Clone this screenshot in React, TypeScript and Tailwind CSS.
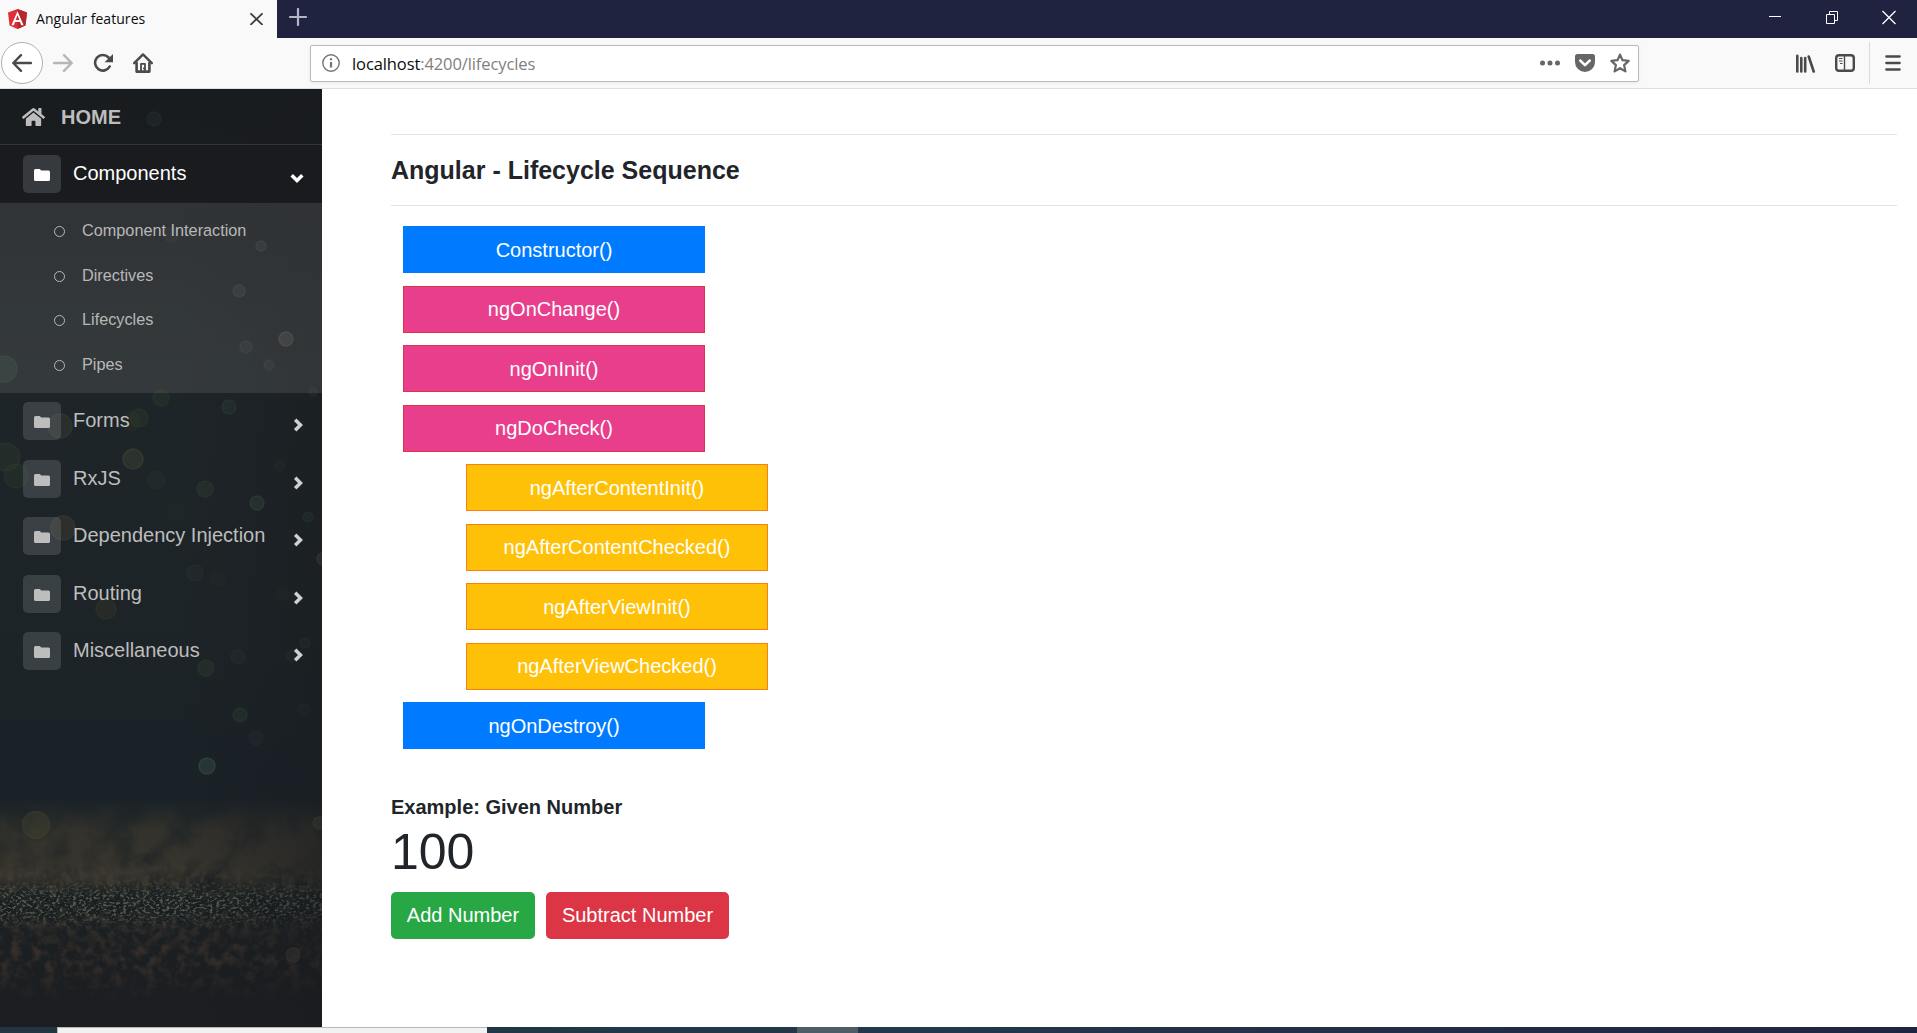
import React from "react";
import { FaHome } from "react-icons/fa";

const BOKEH: [number, number, number, string, number][] = [
  [154, 119, 7, "#2c4a44", 0.45],
  [171, 235, 7, "#4c5654", 0.25],
  [261, 246, 5, "#5a6a66", 0.5],
  [239, 291, 6, "#486055", 0.65],
  [286, 339, 7, "#6f675f", 0.95],
  [246, 347, 6, "#4a5a50", 0.55],
  [269, 365, 5, "#486058", 0.5],
  [4, 369, 13, "#355347", 0.7],
  [161, 398, 8, "#2f4a33", 0.55],
  [229, 407, 7, "#3a5548", 0.6],
  [313, 392, 4, "#3a5545", 0.6],
  [60, 426, 12, "#45483a", 0.7],
  [139, 418, 9, "#33452c", 0.6],
  [131, 421, 9, "#38402d", 0.4],
  [6, 457, 14, "#35402f", 0.7],
  [16, 476, 12, "#354830", 0.5],
  [133, 459, 10, "#4d5338", 0.7],
  [156, 480, 9, "#35453a", 0.35],
  [205, 489, 8, "#40513c", 0.55],
  [257, 503, 7, "#4d6855", 0.65],
  [280, 465, 5, "#41463d", 0.4],
  [308, 517, 5, "#416255", 0.5],
  [63, 528, 12, "#504637", 0.75],
  [176, 512, 9, "#35453a", 0.2],
  [195, 573, 8, "#3c4a48", 0.35],
  [218, 578, 8, "#3c4a48", 0.2],
  [323, 559, 6, "#755c5a", 0.8],
  [106, 609, 10, "#403c2a", 0.7],
  [283, 594, 6, "#3c4a42", 0.3],
  [305, 643, 5, "#35544a", 0.5],
  [238, 657, 7, "#3b4a45", 0.4],
  [206, 668, 8, "#3b5032", 0.6],
  [293, 656, 6, "#38483d", 0.5],
  [240, 715, 7, "#35503d", 0.7],
  [304, 710, 6, "#34453f", 0.45],
  [256, 738, 7, "#304650", 0.4],
  [207, 766, 8, "#42605a", 0.85],
  [36, 825, 13.5, "#46482f", 0.85],
  [319, 823, 6, "#52603f", 0.8],
  [288, 882, 6, "#454835", 0.7],
  [293, 955, 7, "#5c4c44", 0.75],
];

function NightBackdrop() {
  return (
    <svg className="absolute inset-0 h-full w-full" viewBox="0 89 322 938" preserveAspectRatio="none" aria-hidden="true">
      <defs>
        <linearGradient id="sky" x1="0" y1="0" x2="0" y2="1">
          <stop offset="0" stopColor="#191c1f" />
          <stop offset="0.1" stopColor="#1a1d20" />
          <stop offset="0.3" stopColor="#1e2528" />
          <stop offset="0.6" stopColor="#1d2427" />
          <stop offset="0.74" stopColor="#1a2228" />
          <stop offset="0.79" stopColor="#1d2426" />
          <stop offset="0.86" stopColor="#1c2023" />
          <stop offset="1" stopColor="#1c1e21" />
        </linearGradient>
        <linearGradient id="edge" x1="0" y1="0" x2="1" y2="0">
          <stop offset="0.55" stopColor="#181a1e" stopOpacity="0" />
          <stop offset="1" stopColor="#181a1e" stopOpacity="0.45" />
        </linearGradient>
        <linearGradient id="fadeHaze" x1="0" y1="0" x2="0" y2="1">
          <stop offset="0" stopColor="#000" />
          <stop offset="0.3" stopColor="#ccc" />
          <stop offset="0.7" stopColor="#fff" />
          <stop offset="1" stopColor="#000" />
        </linearGradient>
        <linearGradient id="fadeBand" x1="0" y1="0" x2="0" y2="1">
          <stop offset="0" stopColor="#000" />
          <stop offset="0.35" stopColor="#fff" />
          <stop offset="0.6" stopColor="#fff" />
          <stop offset="1" stopColor="#000" />
        </linearGradient>
        <mask id="hazeMask"><rect x="0" y="800" width="322" height="105" fill="url(#fadeHaze)" /></mask>
        <mask id="grainMask"><rect x="0" y="880" width="322" height="50" fill="url(#fadeBand)" /></mask>
        <mask id="midMask"><rect x="0" y="858" width="322" height="90" fill="url(#fadeBand)" /></mask>
        <mask id="lowMask"><rect x="0" y="912" width="322" height="90" fill="url(#fadeBand)" /></mask>
        <filter id="haze" x="0" y="0" width="1" height="1" colorInterpolationFilters="sRGB">
          <feTurbulence type="fractalNoise" baseFrequency="0.03" numOctaves="4" seed="4" />
          <feColorMatrix values="0 0 0 0 0.225  0 0 0 0 0.21  0 0 0 0 0.18  2 0 0 0 -0.2" />
        </filter>
        <filter id="grain" x="0" y="0" width="1" height="1" colorInterpolationFilters="sRGB">
          <feTurbulence type="fractalNoise" baseFrequency="0.3 0.42" numOctaves="2" seed="9" />
          <feColorMatrix values="0 0 0 0 0.36  0 0 0 0 0.38  0 0 0 0 0.33  7 0 0 0 -3.6" />
        </filter>
        <filter id="mid" x="0" y="0" width="1" height="1" colorInterpolationFilters="sRGB">
          <feTurbulence type="fractalNoise" baseFrequency="0.14" numOctaves="2" seed="3" />
          <feColorMatrix values="0 0 0 0 0.28  0 0 0 0 0.27  0 0 0 0 0.22  5 0 0 0 -2.3" />
        </filter>
        <filter id="low" x="0" y="0" width="1" height="1" colorInterpolationFilters="sRGB">
          <feTurbulence type="fractalNoise" baseFrequency="0.09" numOctaves="3" seed="12" />
          <feColorMatrix values="0 0 0 0 0.235  0 0 0 0 0.2  0 0 0 0 0.175  3 0 0 0 -1.3" />
        </filter>
      </defs>
      <rect x="0" y="89" width="322" height="938" fill="url(#sky)" />
      <g mask="url(#hazeMask)"><rect x="0" y="800" width="322" height="105" filter="url(#haze)" /></g>
      <g mask="url(#midMask)"><rect x="0" y="858" width="322" height="90" filter="url(#mid)" opacity="0.7" /></g>
      <g mask="url(#grainMask)">
        <rect x="0" y="880" width="322" height="50" fill="#191e20" opacity="0.65" />
        <rect x="0" y="880" width="322" height="50" filter="url(#grain)" opacity="0.85" />
      </g>
      <g mask="url(#lowMask)"><rect x="0" y="912" width="322" height="90" filter="url(#low)" opacity="0.8" /></g>
      {BOKEH.map(([x, y, r, c, o], i) => (
        <circle key={i} cx={x} cy={y} r={r} fill={c} fillOpacity={o * 0.42} stroke={c} strokeOpacity={o * 0.5} strokeWidth="1.5" />
      ))}
      <rect x="0" y="89" width="322" height="938" fill="url(#edge)" />
    </svg>
  );
}

function AngularLogo() {
  return (
    <svg className="h-5 w-[19px]" viewBox="0 0 250 250" preserveAspectRatio="none">
      <path fill="#dd3037" d="M125 0 0 44l20 162 105 44 105-44 20-162z" />
      <path fill="#b5282e" d="M125 0v250l105-44 20-162z" />
      <path fill="#fff" d="M125 28 45 202h31l16-40h66l16 40h31zm24 109h-48l24-60z" />
    </svg>
  );
}

function TitleBar() {
  return (
    <div className="flex h-[38px] items-start bg-[#202340]">
      <div className="flex h-[38px] w-[277px] items-center bg-[#f9f9fa] pb-px pl-2">
        <AngularLogo />
        <span className="ml-[9px] w-[130px] whitespace-nowrap font-['Open_Sans',sans-serif] text-[14px] leading-5 tracking-[0.05px] text-[#0c0c0d]">Angular features</span>
        <svg className="ml-[84px] h-3 w-[13px]" viewBox="0 0 13 12" stroke="#3d3d3f" strokeWidth="1.8" strokeLinecap="round">
          <path d="M1 .8 12 11.4M12 .8 1 11.4" />
        </svg>
      </div>
      <svg className="ml-3 mt-2 h-[18px] w-[18px]" viewBox="0 0 18 18" stroke="#b4b5c0" strokeWidth="2.200" strokeLinecap="round">
        <path d="M9 1v16M1 9h16" />
      </svg>
      <div className="ml-auto mr-[21px] mt-[10px] flex">
        <svg className="h-[15px] w-[130px]" viewBox="0 0 130 15" fill="none" stroke="#fff" strokeWidth="1">
          <path d="M3 6.500h12M60.500 4.500h8v9h-8zM63.500 4.500v-3h8v9h-3" />
          <path d="M116.500 1l13 13M129.500 1l-13 13" strokeWidth="1.300" />
        </svg>
      </div>
    </div>
  );
}

function Toolbar() {
  return (
    <div className="flex h-[51px] items-center border-b border-[#dededf] bg-[#f9f9fa]">
      <div className="ml-px flex h-[42px] w-[42px] items-center justify-center rounded-full border border-[#b1b1b3] bg-white">
        <svg className="h-5 w-5" viewBox="0 0 20 20" fill="none" stroke="#4a4a4c" strokeWidth="2.400" strokeLinecap="round" strokeLinejoin="round">
          <path d="M19 10H1.500M9 2.200 1.300 10 9 17.800" />
        </svg>
      </div>
      <svg className="ml-[10px] h-5 w-5" viewBox="0 0 20 20" fill="none" stroke="#b6b6b8" strokeWidth="2.400" strokeLinecap="round" strokeLinejoin="round">
        <path d="M1 10h17.500M11 2.200l7.700 7.800-7.700 7.800" />
      </svg>
      <svg className="ml-5 h-5 w-5" viewBox="0 0 20 20" fill="none">
        <path d="M16.700 13.500A7.800 7.800 0 1 1 15.600 4.500" stroke="#4a4a4c" strokeWidth="2.600" strokeLinecap="round" />
        <path d="M20 1v8.200h-8.500z" fill="#4a4a4c" />
      </svg>
      <svg className="ml-5 h-5 w-5" viewBox="0 0 20 20" fill="none" stroke="#4a4a4c" strokeLinejoin="round" strokeLinecap="round">
        <path d="M1.200 10.200 10 1.400l8.800 8.800" strokeWidth="2.400" />
        <path d="M3.600 10v8.600h12.800V10" strokeWidth="2.600" />
        <path d="M8 18.500v-7.700h4v7.700" strokeWidth="1.800" />
        <path d="M11 15.200v.5" strokeWidth="1.800" />
      </svg>
      <div className="ml-[157px] flex h-[37px] w-[1329px] items-center rounded-[2px] border border-[#b9bab9] bg-white shadow-[0_1px_4px_rgba(0,0,0,0.06)]">
        <svg className="ml-[11px] h-[18px] w-[18px]" viewBox="0 0 18 18" fill="none" stroke="#737373">
          <circle cx="9" cy="9" r="8.200" strokeWidth="1.400" />
          <path d="M9 8v5.500M9 4.200v2" strokeWidth="2.200" />
        </svg>
        <span className="ml-3 mt-0.5 whitespace-nowrap font-['Open_Sans',sans-serif] text-[16.5px] tracking-[-0.1px] text-[#0c0c0d]">
          localhost<span className="text-[#808080]">:4200/lifecycles</span>
        </span>
        <div className="ml-auto mr-2 flex items-center">
          <svg className="h-5 w-5" viewBox="0 0 20 20" fill="#666">
            <circle cx="2.500" cy="10" r="2.500" /><circle cx="10" cy="10" r="2.500" /><circle cx="17.500" cy="10" r="2.500" />
          </svg>
          <svg className="ml-[15px] h-[18px] w-5" viewBox="0 0 20 18">
            <path d="M2.500 0h15A2.500 2.500 0 0 1 20 2.500V8a10 10 0 0 1-20 0V2.500A2.500 2.500 0 0 1 2.500 0z" fill="#666" />
            <path d="m5.200 6.500 4.800 4.600 4.800-4.600" fill="none" stroke="#fff" strokeWidth="2.500" strokeLinecap="round" strokeLinejoin="round" />
          </svg>
          <svg className="ml-[15px] h-5 w-5" viewBox="0 0 20 20" fill="none" stroke="#666" strokeWidth="2.200" strokeLinejoin="round">
            <path d="m10 1.600 2.500 5.600 6.200.7-4.600 4.200 1.300 6.300-5.400-3.200-5.400 3.200 1.300-6.300L1.300 7.900l6.200-.7z" />
          </svg>
        </div>
      </div>
      <svg className="ml-[157px] h-[19px] w-[19px]" viewBox="0 0 19 19" stroke="#4a4a4c" strokeWidth="2.600" strokeLinecap="round">
        <path d="M1.300 1.800v15.700M5.300 4v13.500M9.200 4v13.500M12.700 2.500l5 15" />
      </svg>
      <svg className="ml-5 h-[18px] w-5" viewBox="0 0 20 18" fill="none" stroke="#4a4a4c">
        <rect x="1.200" y="1.200" width="17.600" height="15.600" rx="2.800" strokeWidth="2.400" />
        <path d="M9.500 1.500v15" strokeWidth="1.400" />
        <path d="M4 4.500h3.500M4 7h3.500M5 9.500h2.500" strokeWidth="1.100" />
      </svg>
      <div className="ml-[14px] h-[42px] w-px bg-[#dadadb]" />
      <svg className="ml-[15px] h-4 w-4" viewBox="0 0 16 16" stroke="#4a4a4c" strokeWidth="2.300" strokeLinecap="round">
        <path d="M1.300 1.500h13.400M1.300 8h13.400M1.300 14.500h13.400" />
      </svg>
    </div>
  );
}

function MenuRow({ label, open }: { label: string; open?: boolean }) {
  const base = "flex h-[57.5px] items-start pl-[23px] pt-[9.5px]";
  return (
    <div className={open ? base + " bg-[#1a1b1e]/70 text-white" : base + " text-[#bdbdbd]"}>
      <span className="flex h-[38px] w-[38px] items-center justify-center rounded-[5px] bg-[#90949a]/25">
        <svg className="mt-0.5 h-3 w-4" viewBox="0 0 16 12" fill="currentColor">
          <path d="M1.500 0h4.200l1.600 1.600h7.200A1.500 1.500 0 0 1 16 3.100v7.400a1.500 1.500 0 0 1-1.500 1.500h-13A1.500 1.500 0 0 1 0 10.500v-9A1.500 1.500 0 0 1 1.500 0z" />
        </svg>
      </span>
      <span className="ml-3 mt-[3px] text-[20px] leading-[30px]">{label}</span>
      {open ? (
        <svg className="ml-auto mr-[18px] mt-[16px] h-[14px] w-[14px]" viewBox="0 0 14 14" fill="none" stroke="currentColor" strokeWidth="3.500">
          <path d="m1.700 4.200 5.300 5.300 5.300-5.300" />
        </svg>
      ) : (
        <svg className="ml-auto mr-[18px] mt-[16px] h-[14px] w-[14px] text-[#d0d0d0]" viewBox="0 0 14 14" fill="none" stroke="currentColor" strokeWidth="3.500">
          <path d="m5.200 1.700 5.300 5.300-5.300 5.300" />
        </svg>
      )}
    </div>
  );
}

function Sidebar() {
  return (
    <aside className="relative w-[322px] shrink-0 overflow-hidden">
      <NightBackdrop />
      <div className="relative">
        <div className="flex h-14 items-center border-b border-[#343639] pl-[22px] text-[#bdbdbd]">
          <FaHome className="h-[22px] w-[23px]" />
          <span className="ml-[16px] text-[20px] font-bold">HOME</span>
        </div>
        <MenuRow label="Components" open />
        <ul className="h-[190px] bg-[#8c8c8c]/20 pt-[5.5px] text-[#b8b8b8]">
          {["Component Interaction", "Directives", "Lifecycles", "Pipes"].map((t) => (
            <li key={t} className="flex h-[44.600px] items-center pl-[54px]">
              <span className="mt-[3px] h-[11px] w-[11px] rounded-full border-[1.5px] border-current" />
              <span className="ml-[17px] text-[16.250px]">{t}</span>
            </li>
          ))}
        </ul>
        {["Forms", "RxJS", "Dependency Injection", "Routing", "Miscellaneous"].map((t) => (
          <MenuRow key={t} label={t} />
        ))}
      </div>
    </aside>
  );
}

const HOOKS: [string, string][] = [
  ["Constructor()", "border-[#007bff] bg-[#007bff]"],
  ["ngOnChange()", "border-[#dc3545] bg-[#e83e8c]"],
  ["ngOnInit()", "border-[#dc3545] bg-[#e83e8c]"],
  ["ngDoCheck()", "border-[#dc3545] bg-[#e83e8c]"],
  ["ngAfterContentInit()", "ml-[63px] border-[#fd7e14] bg-[#ffc107]"],
  ["ngAfterContentChecked()", "ml-[63px] border-[#fd7e14] bg-[#ffc107]"],
  ["ngAfterViewInit()", "ml-[63px] border-[#fd7e14] bg-[#ffc107]"],
  ["ngAfterViewChecked()", "ml-[63px] border-[#fd7e14] bg-[#ffc107]"],
  ["ngOnDestroy()", "border-[#007bff] bg-[#007bff]"],
];

export default function App() {
  return (
    <div className="flex h-[1033px] w-[1917px] flex-col overflow-hidden bg-white font-['Liberation_Sans',Arial,sans-serif] text-[#212529]">
      <TitleBar />
      <Toolbar />
      <div className="flex h-[938px]">
        <Sidebar />
        <main className="flex-1 pl-[69px] pr-5 pt-[45px]">
          <hr className="border-[#e3e3e3]" />
          <h1 className="mt-5 text-[25px] font-bold leading-[30px]">Angular - Lifecycle Sequence</h1>
          <hr className="mt-5 border-[#e3e3e3]" />
          <div className="ml-3 mt-5 flex flex-col gap-[12.5px]">
            {HOOKS.map(([name, tone]) => (
              <div key={name} className={"flex h-[47px] w-[302px] items-center justify-center border text-[20px] text-white " + tone}>
                {name}
              </div>
            ))}
          </div>
          <h2 className="mt-[43px] text-[20px] font-bold leading-[30px]">Example: Given Number</h2>
          <p className="text-[50px] leading-[60px]">100</p>
          <div className="mt-[10px] flex gap-[11px]">
            <button className="h-[47px] w-[144px] rounded-[5px] bg-[#28a745] pb-0.5 text-[20px] text-white">Add Number</button>
            <button className="h-[47px] w-[183px] rounded-[5px] bg-[#dc3545] pb-0.5 text-[20px] text-white">Subtract Number</button>
          </div>
        </main>
      </div>
      <div className="flex h-[6px] bg-gradient-to-r from-[#213640] via-[#22374a] to-[#20253f]">
        <div className="ml-[57px] w-[430px] border-l border-t border-[#b8b8b8] bg-[#f2f2f2]" />
        <div className="ml-[310px] w-[61px] bg-[#4d5e67]" />
      </div>
    </div>
  );
}
